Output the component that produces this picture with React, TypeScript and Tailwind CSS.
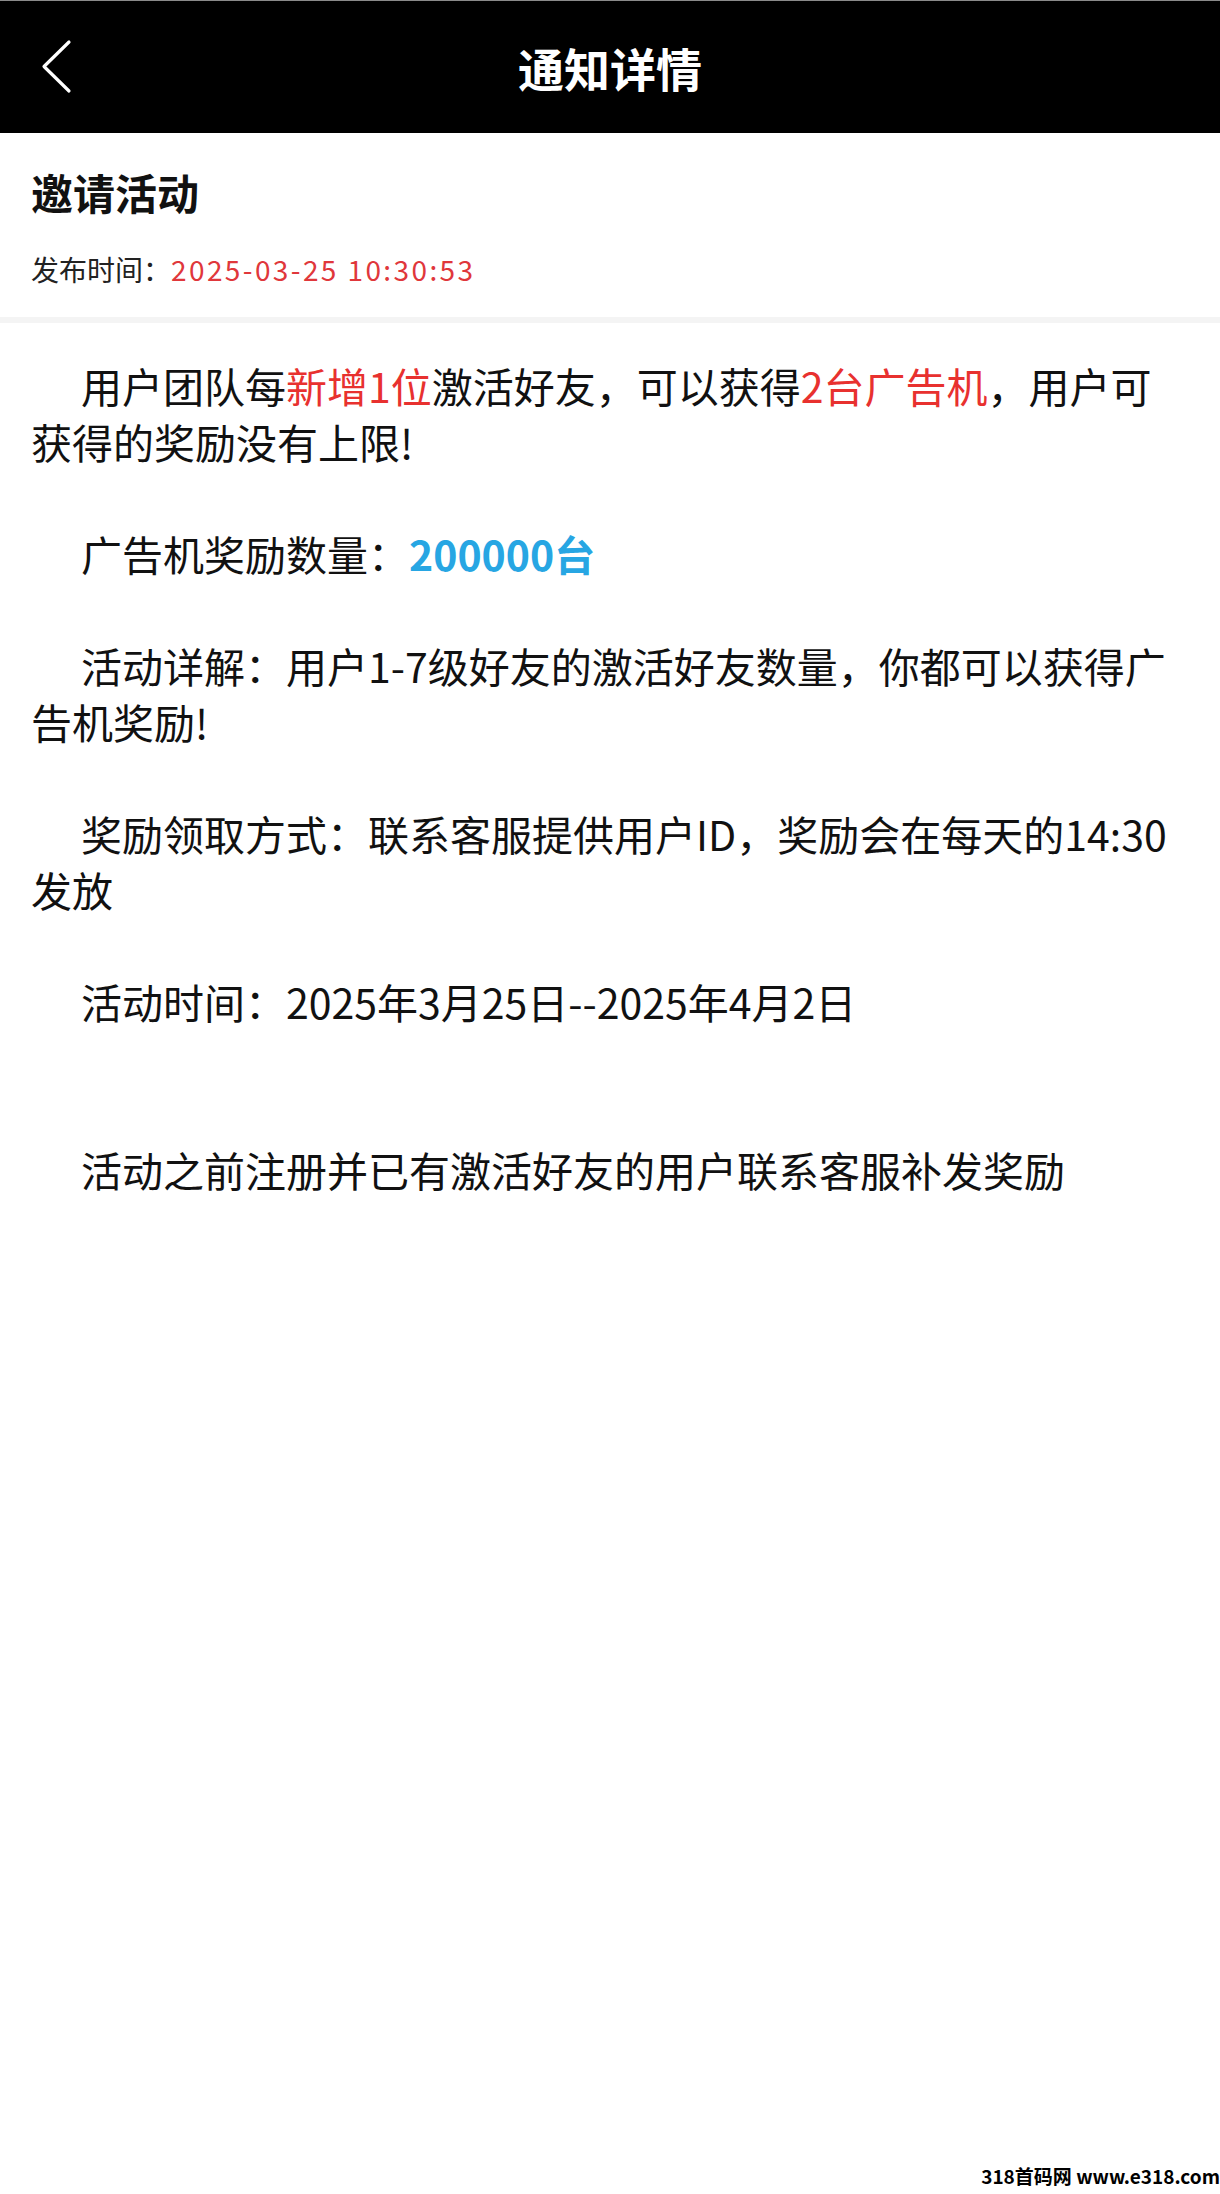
import { ReactNode } from 'react';

const font = "font-['Noto_Sans_CJK_SC','Noto_Sans',sans-serif]";

function Para({ children, gap = 'mt-[56px]' }: { children: ReactNode; gap?: string }) {
  return <p className={`${gap} indent-[50px]`}>{children}</p>;
}

export default function App() {
  return (
    <div className={`min-h-[2194px] flex flex-col bg-white text-[#111] ${font}`}>
      {/* top bar */}
      <header className="h-[133px] bg-black border-t border-[#8a8a8a] grid grid-cols-[1fr_auto_1fr] items-center">
        <button aria-label="返回" className="pl-[41px] flex items-center">
          <svg width="32" height="56" viewBox="0 0 32 56" fill="none">
            <path d="M28 3 L3 27.5 L28 52" stroke="white" strokeWidth="3.2" strokeLinecap="round" strokeLinejoin="round" />
          </svg>
        </button>
        <h1 className="text-white text-[46px] font-bold leading-none">通知详情</h1>
        <div />
      </header>

      {/* title + time */}
      <section className="px-[31px] pt-[31px] pb-[28px]">
        <h2 className="text-[42px] font-bold leading-[56px]">邀请活动</h2>
        <div className="mt-[29px] flex items-center text-[28px] leading-[40px]">
          <span className="text-[#222]">发布时间：</span>
          <span className="text-[#e0373b] tracking-[2.4px]">2025-03-25 10:30:53</span>
        </div>
      </section>
      <div className="h-[6px] bg-[#f4f4f4]" />

      {/* content */}
      <article className="pl-[31px] pr-[44px] pt-[34px] text-[41px] leading-[56px]">
        <Para gap="">
          用户团队每<span className="text-[#e8312f]">新增1位</span>激活好友，可以获得
          <span className="text-[#e8312f]">2台广告机</span>，用户可获得的奖励没有上限!
        </Para>
        <Para>
          广告机奖励数量：<span className="text-[#27a6e3] font-bold">200000台</span>
        </Para>
        <Para>活动详解：用户1-7级好友的激活好友数量，你都可以获得广告机奖励!</Para>
        <Para>奖励领取方式：联系客服提供用户ID，奖励会在每天的14:30发放</Para>
        <Para>活动时间：2025年3月25日--2025年4月2日</Para>
        <Para gap="mt-[112px]">活动之前注册并已有激活好友的用户联系客服补发奖励</Para>
      </article>

      {/* watermark */}
      <footer className="mt-auto flex justify-end pb-[6px]">
        <span className="text-[19px] font-bold leading-[24px] text-black">318首码网 www.e318.com</span>
      </footer>
    </div>
  );
}
